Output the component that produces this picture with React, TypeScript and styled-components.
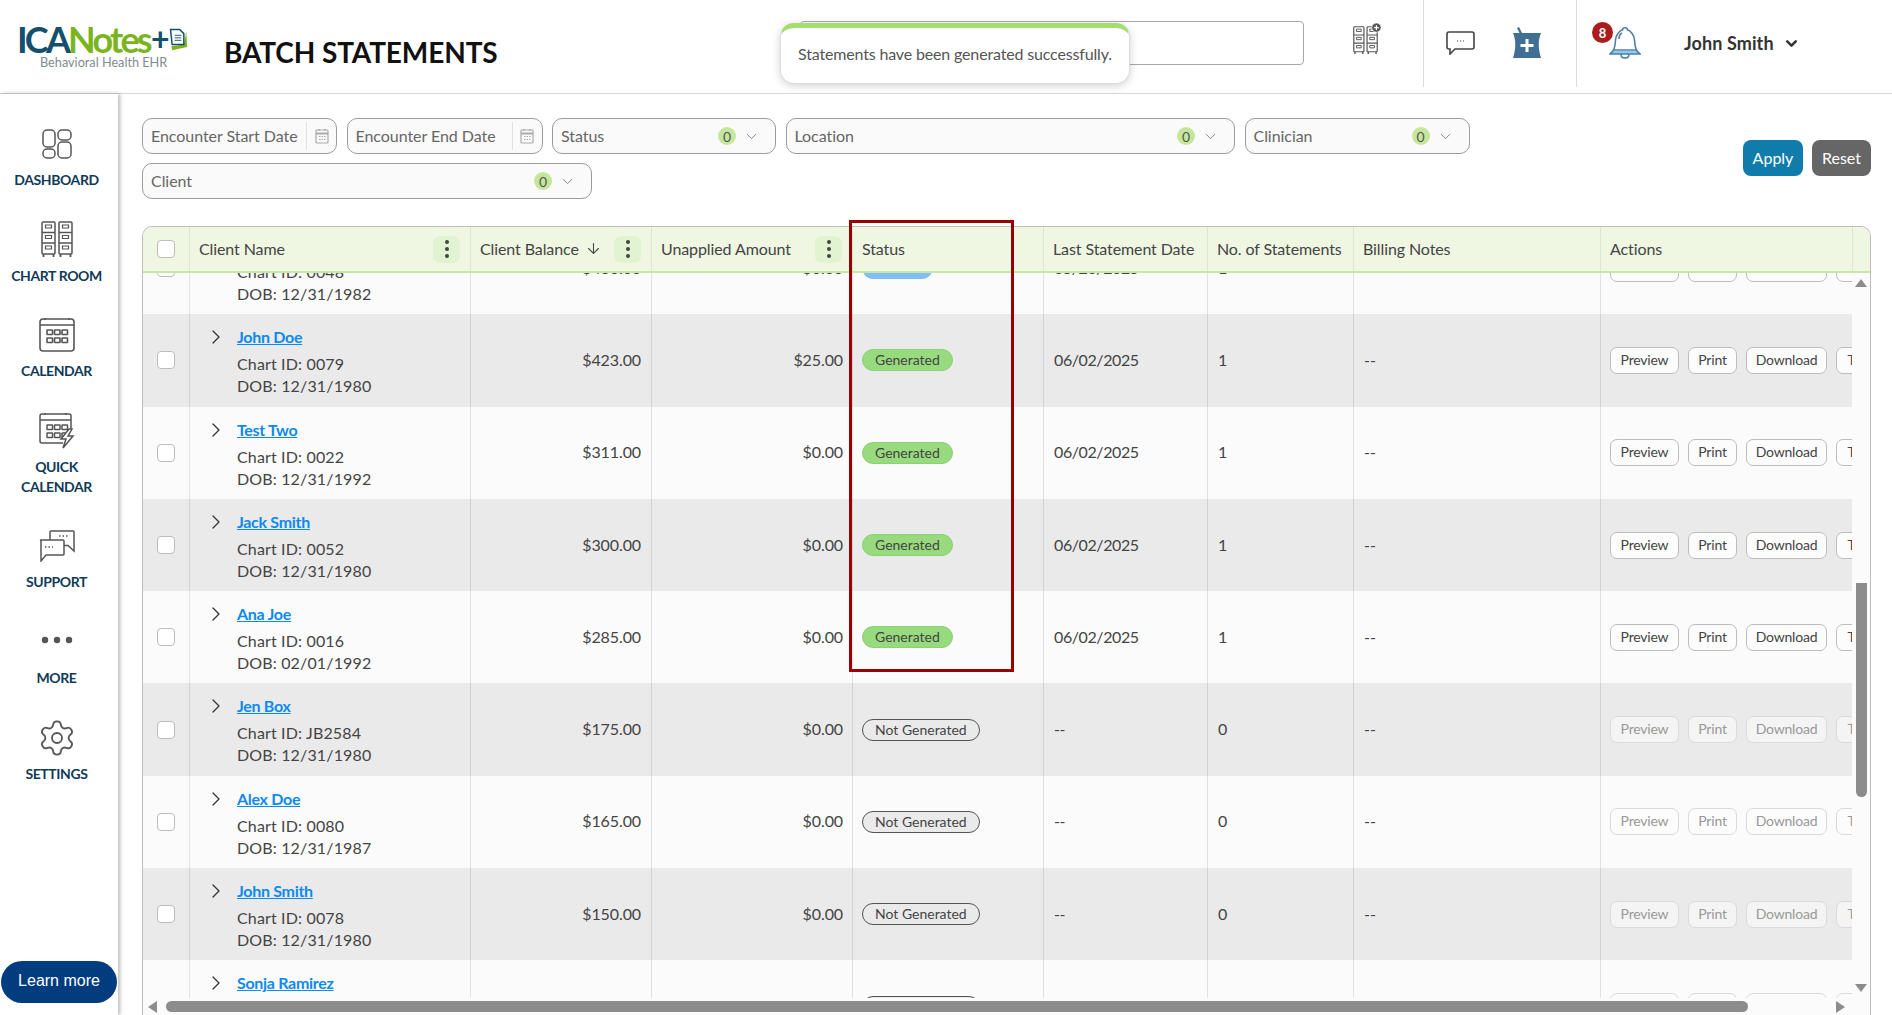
import React from 'react';
import styled, { createGlobalStyle } from 'styled-components';
import { ChevronDown, ChevronRight, ArrowDown, Settings } from 'lucide-react';

const Global = createGlobalStyle`
  html, body { margin: 0; padding: 0; height: 100%; overflow: hidden; background: #fff; }
  body { font-family: Lato, "Open Sans", sans-serif; color: #444; }
  * { box-sizing: border-box; }
`;

const Page = styled.div`
  position: relative;
  width: 1892px;
  height: 1015px;
  display: flex;
  flex-direction: column;
  overflow: hidden;
`;

/* ---------- header ---------- */
const Header = styled.header`
  flex: 0 0 94px;
  display: flex;
  align-items: flex-start;
  border-bottom: 1px solid #d6d6d6;
`;
const Logo = styled.div`
  flex: 0 0 224px;
  padding: 21px 0 0 17px;
`;
const LogoMark = styled.div`
  display: flex;
  align-items: center;
  height: 36px;
  font-size: 36px;
  font-weight: 700;
  letter-spacing: -2.8px;
  line-height: 36px;
`;
const LogoIca = styled.span`color: #14506e;`;
const LogoNotes = styled.span`color: #7ab51d;`;
const LogoPlus = styled.span`color: #14506e; margin-left: 1px; font-size: 32px; letter-spacing: -1px;`;
const LogoTag = styled.div`
  margin: -2px 0 0 23px;
  font-size: 12.7px;
  line-height: 15px;
  color: #7f8c92;
  white-space: nowrap;
`;
const Title = styled.h1`
  flex: 0 0 576px;
  margin: 0;
  padding-top: 34px;
  font-size: 28px;
  line-height: 36px;
  font-weight: 700;
  letter-spacing: -0.12px;
  color: #111;
  white-space: nowrap;
`;
const Search = styled.div`
  flex: 0 0 504px;
  height: 44px;
  margin-top: 21px;
  border: 1px solid #a4a9b0;
  border-radius: 4px;
  background: #fff;
  padding: 11px 40px;
  font-size: 16px;
  color: #aaa;
`;
const HeadIcon = styled.div<{ $left: number; $top: number }>`
  flex: none;
  display: flex;
  margin-left: ${p => p.$left}px;
  margin-top: ${p => p.$top}px;
  position: relative;
`;
const Divider = styled.div<{ $left: number }>`
  flex: none;
  width: 1px;
  height: 87px;
  margin-left: ${p => p.$left}px;
  background: #dcdcdc;
`;
const Badge = styled.span`
  position: absolute;
  left: -17px;
  top: -4px;
  width: 21px;
  height: 21px;
  border-radius: 50%;
  background: #ab1c1c;
  color: #fff;
  font-size: 13px;
  font-weight: 700;
  display: flex;
  align-items: center;
  justify-content: center;
`;
const UserName = styled.div`
  flex: none;
  display: flex;
  align-items: center;
  gap: 9px;
  margin: 31px 0 0 43px;
  font-size: 18px;
  line-height: 24px;
  font-weight: 700;
  color: #333;
  letter-spacing: 0.1px;
`;
const Toast = styled.div`
  position: absolute;
  left: 780px;
  top: 23px;
  width: 350px;
  height: 61px;
  border-radius: 14px;
  background: #fff;
  border: 1px solid #ddd;
  border-top: 5px solid #a6dd70;
  box-shadow: 0 2px 8px rgba(0, 0, 0, 0.18);
  padding: 14px 0 0 17px;
  font-size: 16px;
  line-height: 24px;
  letter-spacing: -0.16px;
  color: #555;
  white-space: nowrap;
`;

/* ---------- sidebar ---------- */
const Body = styled.div`
  flex: 1;
  min-height: 0;
  display: flex;
`;
const Sidebar = styled.nav`
  flex: 0 0 118px;
  min-width: 0;
  display: flex;
  flex-direction: column;
  padding: 30px 6px 12px 1px;
  gap: 29.6px;
  box-shadow: 2px 0 4px rgba(0, 0, 0, 0.28);
  position: relative;
  z-index: 1;
`;
const NavItem = styled.div`
  display: flex;
  flex-direction: column;
  align-items: center;
`;
const NavIcon = styled.div`
  height: 40px;
  display: flex;
  align-items: center;
  justify-content: center;
`;
const NavLabel = styled.div`
  margin-top: 6px;
  font-size: 14px;
  line-height: 20px;
  font-weight: 700;
  color: #0f3a58;
  text-align: center;
  letter-spacing: -0.4px;
`;
const LearnMore = styled.button`
  flex: none;
  margin-top: auto;
  height: 42px;
  width: 116px;
  border: 0;
  border-radius: 21px;
  background: #003c7e;
  color: #fff;
  padding: 0 0 3px;
  font-family: "Liberation Sans", Arial, sans-serif;
  font-size: 16px;
`;

/* ---------- content ---------- */
const Content = styled.main`
  position: relative;
  flex: 1;
  min-width: 0;
  display: flex;
  flex-direction: column;
  padding: 24px 21px 0 24px;
`;
const Toolbar = styled.div`
  display: flex;
  align-items: flex-start;
  justify-content: space-between;
`;
const Filters = styled.div`
  width: 1340px;
  display: flex;
  flex-wrap: wrap;
  gap: 9px 9.5px;
`;
const Filter = styled.div<{ $w: number }>`
  flex: 0 0 ${p => p.$w}px;
  height: 36px;
  display: flex;
  align-items: center;
  border: 1px solid #9c9c9c;
  border-radius: 10px;
  background: #fafafa;
  padding-left: 8px;
  font-size: 16px;
  color: #666;
`;
const FilterLabel = styled.span`
  flex: 1;
  padding-bottom: 1px;
  white-space: nowrap;
  letter-spacing: -0.05px;
`;
const Count = styled.span`
  width: 18px;
  height: 18px;
  border-radius: 50%;
  background: #c5e79c;
  color: #555;
  font-size: 14px;
  display: flex;
  align-items: center;
  justify-content: center;
  margin-right: 7px;
`;
const FilterChevron = styled.span`
  display: flex;
  margin-right: 15px;
  color: #888;
`;
const DateButton = styled.span`
  flex: 0 0 30px;
  height: 28px;
  display: flex;
  align-items: center;
  justify-content: center;
  border-left: 1px solid #e0e0e0;
`;
const Actions = styled.div`
  display: flex;
  gap: 9px;
  margin-top: 22px;
`;
const MainButton = styled.button<{ $bg: string; $w: number }>`
  width: ${p => p.$w}px;
  height: 36px;
  border: 0;
  border-radius: 8px;
  background: ${p => p.$bg};
  color: #fff;
  font-family: inherit;
  font-size: 16px;
  padding: 0 0 2px;
`;

/* ---------- table ---------- */
const columns = '47px 281px 181px 201px 191px 164px 146px 247px 252px';
const Card = styled.section`
  flex: 1;
  min-height: 0;
  margin-top: 27px;
  display: flex;
  flex-direction: column;
  border: 1px solid #bdbdbd;
  border-bottom: 0;
  border-radius: 10px 10px 0 0;
  overflow: hidden;
  background: #fbfbfb;
`;
const HeadRow = styled.div`
  flex: 0 0 46px;
  display: grid;
  grid-template-columns: ${columns} 1fr;
  background: #eff7e2;
  border-bottom: 2px solid #c8e6a8;
`;
const HeadCell = styled.div`
  display: flex;
  align-items: center;
  justify-content: space-between;
  padding: 0 10px 0 9px;
  font-size: 16px;
  letter-spacing: -0.1px;
  color: #444;
  white-space: nowrap;
  border-right: 1px solid #dce8cc;
`;
const HeadText = styled.span`
  display: flex;
  align-items: center;
  gap: 6px;
  padding-bottom: 2px;
`;
const CheckCell = styled(HeadCell)`
  justify-content: center;
  padding: 0;
`;
const Kebab = styled.span`
  width: 27px;
  height: 27px;
  border-radius: 7px;
  background: #e2f3d1;
  display: flex;
  flex-direction: column;
  align-items: center;
  justify-content: center;
  gap: 3px;
`;
const KebabDot = styled.i`
  width: 4px;
  height: 4px;
  border-radius: 50%;
  background: #444;
`;
const Check = styled.span`
  flex: none;
  width: 18px;
  height: 18px;
  border: 1px solid #bcbcbc;
  border-radius: 4px;
  background: #fff;
`;
const ScrollArea = styled.div`
  flex: 1;
  min-height: 0;
  display: flex;
`;
const Viewport = styled.div`
  flex: 0 0 1709px;
  overflow: hidden;
`;
const Rows = styled.div`
  margin-top: -51px;
`;
const Row = styled.div<{ $odd: boolean }>`
  --line: ${p => (p.$odd ? '#d2d2d2' : '#e2e2e2')};
  height: 92.3px;
  display: grid;
  grid-template-columns: ${columns};
  background: ${p => (p.$odd ? '#eaeaea' : '#fbfbfb')};
  color: #444;
  font-size: 16px;
`;
const Cell = styled.div`
  display: flex;
  align-items: center;
  padding: 0 10px 2px;
  border-right: 1px solid var(--line);
  white-space: nowrap;
  overflow: hidden;
`;
const DateCell = styled(Cell)`
  letter-spacing: -0.4px;
`;
const BoxCell = styled(Cell)`
  justify-content: center;
  padding: 0;
`;
const AmountCell = styled(Cell)<{ $pad: number }>`
  justify-content: flex-end;
  padding: 0 ${p => p.$pad}px 2px 0;
  letter-spacing: -0.1px;
`;
const ClientCell = styled(Cell)`
  display: block;
  padding: 12px 0 0 13.5px;
  line-height: 22px;
`;
const NameLine = styled.div`
  display: flex;
  align-items: center;
  gap: 9.5px;
  height: 22px;
  margin-bottom: 5px;
  color: #333;
`;
const ClientLink = styled.a`
  color: #0c8af0;
  font-weight: 700;
  letter-spacing: -0.3px;
  text-decoration: underline;
`;
const Meta = styled.div`
  margin-left: 33.5px;
  letter-spacing: 0.15px;
`;
const Pill = styled.span<{ $kind: string }>`
  height: 22px;
  display: inline-flex;
  align-items: center;
  padding: 0 12px 1px;
  margin: 2px 0 0 -1px;
  border-radius: 11px;
  font-size: 14px;
  color: #444;
  border: 1px solid
    ${p => (p.$kind === 'Generated' ? '#8cd173' : p.$kind === 'Printed' ? '#7db9f3' : '#555')};
  background: ${p =>
    p.$kind === 'Generated' ? '#98da7e' : p.$kind === 'Printed' ? '#82bff6' : '#eaeaea'};
`;
const ActionCell = styled(Cell)`
  gap: 9px;
  padding: 0 0 0 9px;
  border-right: 0;
`;
const RowButton = styled.button<{ $off: boolean; $odd: boolean; $w: number }>`
  flex: none;
  width: ${p => p.$w}px;
  height: 27px;
  padding: 0 0 2px;
  border-radius: 7px;
  font-family: inherit;
  font-size: 14px;
  letter-spacing: -0.2px;
  border: 1px solid ${p => (p.$off ? '#dadada' : '#bdbdbd')};
  color: ${p => (p.$off ? '#999' : '#444')};
  background: ${p => (p.$off && p.$odd ? '#f4f4f4' : '#fcfcfc')};
`;
const VTrack = styled.div`
  flex: 1;
  display: flex;
  flex-direction: column;
  align-items: center;
  padding: 6px 0 6px;
  background: #fbfbfb;
`;
const VThumb = styled.div`
  flex: none;
  width: 11px;
  height: 214px;
  margin-top: 296px;
  border-radius: 0 0 6px 6px;
  background: #8c8c8c;
`;
const TriUp = styled.i`
  flex: none;
  width: 0;
  height: 0;
  border-left: 6px solid transparent;
  border-right: 6px solid transparent;
  border-bottom: 8px solid #8c8c8c;
`;
const TriDown = styled(TriUp)`
  margin-top: auto;
  border-bottom: 0;
  border-top: 8px solid #8c8c8c;
`;
const HTrack = styled.div`
  flex: 0 0 17px;
  display: flex;
  align-items: center;
  padding: 0 0 0 5px;
  background: #fbfbfb;
`;
const TriLeft = styled.i`
  flex: none;
  width: 0;
  height: 0;
  border-top: 6px solid transparent;
  border-bottom: 6px solid transparent;
  border-right: 9px solid #8c8c8c;
`;
const TriRight = styled.i`
  flex: none;
  width: 0;
  height: 0;
  margin-left: 88px;
  border-top: 6px solid transparent;
  border-bottom: 6px solid transparent;
  border-left: 9px solid #8c8c8c;
`;
const HThumb = styled.div`
  flex: none;
  width: 1582px;
  height: 11px;
  margin-left: 9px;
  border-radius: 6px;
  background: #8c8c8c;
`;
const Highlight = styled.div`
  position: absolute;
  left: 731px;
  top: 126px;
  width: 165px;
  height: 452px;
  border: 3px solid #990000;
  pointer-events: none;
`;

/* ---------- drawings ---------- */
const S = '#555';
const DocMark = () => (
  <svg width="20" height="25" viewBox="0 0 24 30">
    <path d="M22 6 L23 24 L5 28 L4 23 L19 21 Z" fill="#7ab51d" />
    <path d="M3 3 H14 L19 8 V21 H5 Z" fill="#fff" stroke="#14506e" strokeWidth="1.8" />
    <path d="M8 10 H16 M8 13 H16 M8 16 H16" stroke="#14506e" strokeWidth="1.1" />
  </svg>
);
const DashboardIcon = () => (
  <svg width="30" height="30" viewBox="0 0 30 30" fill="none" stroke={S} strokeWidth="1.5">
    <rect x="1" y="1" width="12" height="17" rx="4" />
    <rect x="1" y="20" width="12" height="9" rx="4" />
    <rect x="16" y="1" width="13" height="10" rx="4" />
    <rect x="16" y="13" width="13" height="16" rx="4" />
  </svg>
);
const Cabinets = ({ size = 32, plus = false }: { size?: number; plus?: boolean }) => (
  <svg
    width={size}
    height={size * 1.14}
    viewBox="0 0 32 36.5"
    fill="none"
    stroke={S}
    strokeWidth="1.5"
    style={{ overflow: 'visible' }}
  >
    {[1, 18].map(x => (
      <g key={x}>
        <rect x={x} y="1" width="13" height="32" rx="1" />
        <path d={`M${x} 11.5 H${x + 13} M${x} 22 H${x + 13}`} />
        <path d={`M${x + 3.5} 4 H${x + 9.5} V7 H${x + 3.5} Z M${x + 3.5} 14.5 H${x + 9.5} V17.5 H${x + 3.5} Z M${x + 3.5} 25 H${x + 9.5} V28 H${x + 3.5} Z`} strokeWidth="1.2" />
        <path d={`M${x + 1.5} 33 V36 M${x + 11.5} 33 V36`} strokeWidth="1.8" />
      </g>
    ))}
    {plus && (
      <g>
        <circle cx="30" cy="2" r="6" fill={S} stroke="#fff" strokeWidth="1" />
        <path d="M27 2 H33 M30 -1 V5" stroke="#fff" strokeWidth="1.6" />
      </g>
    )}
  </svg>
);
const CalendarGrid = () => (
  <g>
    {[8, 15.5, 23].map(x =>
      [13, 21].map(y => <rect key={`${x}${y}`} x={x} y={y} width="5.5" height="4.5" rx="0.5" />),
    )}
  </g>
);
const CalendarIcon = () => (
  <svg width="36" height="36" viewBox="0 0 36 36" fill="none" stroke={S} strokeWidth="1.6">
    <rect x="1" y="2" width="34" height="32" rx="3" />
    <path d="M1 8 H35 M6 1 V3 M30 1 V3" />
    <CalendarGrid />
  </svg>
);
const QuickIcon = () => (
  <svg width="36" height="37" viewBox="0 0 36 37" fill="none" stroke={S} strokeWidth="1.5">
    <path d="M24 31 H3 Q1 31 1 29 V4 Q1 2 3 2 H30 Q32 2 32 4 V17" />
    <path d="M1 8 H32 M6 1 V3 M27 1 V3" />
    <CalendarGrid />
    <path d="M30 17 L22 27 H27 L24 36 L34 24 H29 L33 17 Z" fill="#fff" />
  </svg>
);
const SupportIcon = () => (
  <svg width="36" height="32" viewBox="0 0 36 32" fill="none" stroke={S} strokeWidth="1.5">
    <path d="M11 10 V2 Q11 1 12 1 H34 Q35 1 35 2 V21 L29 15.5 H25" />
    <path d="M2 10 H24 Q25 10 25 11 V24 Q25 25 24 25 H7 L2 31 V11 Q1 10 2 10 Z" fill="#fff" />
    <path d="M20 6 H29 M6 17 H14" strokeDasharray="1.5 2" />
  </svg>
);
const DotsIcon = () => (
  <svg width="32" height="10" viewBox="0 0 32 10" style={{ marginTop: -4 }} fill="#555">
    <circle cx="4" cy="5" r="3.2" />
    <circle cx="16" cy="5" r="3.2" />
    <circle cx="28" cy="5" r="3.2" />
  </svg>
);
const ChatIcon = () => (
  <svg width="29" height="24" viewBox="0 0 29 24" fill="none" stroke="#444" strokeWidth="1.6">
    <path d="M3 1 H26 Q28 1 28 3 V16 Q28 18 26 18 H9 L4 23 V18 H3 Q1 18 1 16 V3 Q1 1 3 1 Z" />
    <path d="M11 10 H18" strokeDasharray="1.2 1.8" strokeWidth="1" />
  </svg>
);
const MortarIcon = () => (
  <svg width="30" height="32" viewBox="0 0 30 32">
    <path d="M7 0 L10 6 H7.5 L5 1 Z" fill="#3f6f94" />
    <path d="M1 6 H29 C26 13 26 21 29 31 H1 C4 21 4 13 1 6 Z" fill="#3f6f94" />
    <path d="M15 12 V25 M8.5 18.5 H21.5" stroke="#fff" strokeWidth="3" />
  </svg>
);
const BellIcon = () => (
  <svg width="32" height="33" viewBox="0 0 32 33" fill="none">
    <path d="M4 25 H28 L30 28 H2 Z" fill="#8ecbf6" />
    <path
      d="M1 28 H31 C27 25 26 22 25.5 14 C25 8 21 4.5 18.5 4 C18.5 1 13.5 1 13.5 4 C11 4.5 7 8 6.5 14 C6 22 5 25 1 28 Z M4 24 H28 M12 28.5 C12 33 20 33 20 28.5 M10 13 C10 10 11 8 13 7"
      stroke="#4f7fa5"
      strokeWidth="1.6"
    />
  </svg>
);
const SmallCalendar = () => (
  <svg width="14" height="16" viewBox="0 0 14 16" fill="none" stroke="#aaa" strokeWidth="1.2">
    <rect x="1" y="2" width="12" height="13" rx="1" />
    <path d="M1 5.5 H13" strokeWidth="2" />
    <path d="M4 1 V3 M10 1 V3" />
    <path d="M4 8.5 H5.5 M6.5 8.5 H8 M9 8.5 H10.5 M4 11.5 H5.5 M6.5 11.5 H8 M9 11.5 H10.5" />
  </svg>
);

/* ---------- data ---------- */
const nav = [
  { label: ['DASHBOARD'], icon: <DashboardIcon /> },
  { label: ['CHART ROOM'], icon: <Cabinets /> },
  { label: ['CALENDAR'], icon: <CalendarIcon /> },
  { label: ['QUICK', 'CALENDAR'], icon: <QuickIcon /> },
  { label: ['SUPPORT'], icon: <SupportIcon /> },
  { label: ['MORE'], icon: <DotsIcon /> },
  { label: ['SETTINGS'], icon: <Settings size={40} strokeWidth={1.1} color="#555" /> },
];

type Rec = {
  name: string; id: string; dob: string; bal: string; un: string;
  status: string; date: string; n: string;
};
const rows: Rec[] = [
  { name: 'Jane Doe', id: '0048', dob: '12/31/1982', bal: '$430.00', un: '$0.00', status: 'Printed', date: '05/20/2025', n: '1' },
  { name: 'John Doe', id: '0079', dob: '12/31/1980', bal: '$423.00', un: '$25.00', status: 'Generated', date: '06/02/2025', n: '1' },
  { name: 'Test Two', id: '0022', dob: '12/31/1992', bal: '$311.00', un: '$0.00', status: 'Generated', date: '06/02/2025', n: '1' },
  { name: 'Jack Smith', id: '0052', dob: '12/31/1980', bal: '$300.00', un: '$0.00', status: 'Generated', date: '06/02/2025', n: '1' },
  { name: 'Ana Joe', id: '0016', dob: '02/01/1992', bal: '$285.00', un: '$0.00', status: 'Generated', date: '06/02/2025', n: '1' },
  { name: 'Jen Box', id: 'JB2584', dob: '12/31/1980', bal: '$175.00', un: '$0.00', status: 'Not Generated', date: '--', n: '0' },
  { name: 'Alex Doe', id: '0080', dob: '12/31/1987', bal: '$165.00', un: '$0.00', status: 'Not Generated', date: '--', n: '0' },
  { name: 'John Smith', id: '0078', dob: '12/31/1980', bal: '$150.00', un: '$0.00', status: 'Not Generated', date: '--', n: '0' },
  { name: 'Sonja Ramirez', id: '0077', dob: '12/31/1980', bal: '$140.00', un: '$0.00', status: 'Not Generated', date: '--', n: '0' },
];

const rowActions = [
  { label: 'Preview', w: 69 },
  { label: 'Print', w: 49 },
  { label: 'Download', w: 81 },
  { label: 'Text', w: 48 },
];

const Dots = () => (
  <Kebab>
    <KebabDot />
    <KebabDot />
    <KebabDot />
  </Kebab>
);

const SelectFilter = ({ label, w }: { label: string; w: number }) => (
  <Filter $w={w}>
    <FilterLabel>{label}</FilterLabel>
    <Count>0</Count>
    <FilterChevron>
      <ChevronDown size={17} strokeWidth={1.4} />
    </FilterChevron>
  </Filter>
);
const DateFilter = ({ label, w }: { label: string; w: number }) => (
  <Filter $w={w}>
    <FilterLabel>{label}</FilterLabel>
    <DateButton>
      <SmallCalendar />
    </DateButton>
  </Filter>
);

export default function App() {
  return (
    <Page>
      <Global />
      <Header>
        <Logo>
          <LogoMark>
            <LogoIca>ICA</LogoIca>
            <LogoNotes>Notes</LogoNotes>
            <LogoPlus>+</LogoPlus>
            <DocMark />
          </LogoMark>
          <LogoTag>Behavioral Health EHR</LogoTag>
        </Logo>
        <Title>BATCH STATEMENTS</Title>
        <Search>Search Charts</Search>
        <HeadIcon $left={49} $top={26}>
          <Cabinets size={25} plus />
        </HeadIcon>
        <Divider $left={45} />
        <HeadIcon $left={22} $top={31}>
          <ChatIcon />
        </HeadIcon>
        <HeadIcon $left={37} $top={27}>
          <MortarIcon />
        </HeadIcon>
        <Divider $left={34} />
        <HeadIcon $left={32} $top={26}>
          <Badge>8</Badge>
          <BellIcon />
        </HeadIcon>
        <UserName>
          John Smith
          <ChevronDown size={17} strokeWidth={3.5} />
        </UserName>
      </Header>
      <Toast>Statements have been generated successfully.</Toast>
      <Body>
        <Sidebar>
          {nav.map(item => (
            <NavItem key={item.label.join()}>
              <NavIcon>{item.icon}</NavIcon>
              <NavLabel>
                {item.label.map(l => (
                  <div key={l}>{l}</div>
                ))}
              </NavLabel>
            </NavItem>
          ))}
          <LearnMore>Learn more</LearnMore>
        </Sidebar>
        <Content>
          <Toolbar>
            <Filters>
              <DateFilter label="Encounter Start Date" w={195} />
              <DateFilter label="Encounter End Date" w={196} />
              <SelectFilter label="Status" w={224} />
              <SelectFilter label="Location" w={449.5} />
              <SelectFilter label="Clinician" w={225} />
              <SelectFilter label="Client" w={450} />
            </Filters>
            <Actions>
              <MainButton $bg="#107cac" $w={60}>Apply</MainButton>
              <MainButton $bg="#666666" $w={59}>Reset</MainButton>
            </Actions>
          </Toolbar>
          <Card>
            <HeadRow>
              <CheckCell><Check /></CheckCell>
              <HeadCell>
                <HeadText>Client Name</HeadText>
                <Dots />
              </HeadCell>
              <HeadCell>
                <HeadText>
                  Client Balance <ArrowDown size={17} strokeWidth={1.5} />
                </HeadText>
                <Dots />
              </HeadCell>
              <HeadCell>
                <HeadText>Unapplied Amount</HeadText>
                <Dots />
              </HeadCell>
              <HeadCell><HeadText>Status</HeadText></HeadCell>
              <HeadCell><HeadText>Last Statement Date</HeadText></HeadCell>
              <HeadCell><HeadText>No. of Statements</HeadText></HeadCell>
              <HeadCell><HeadText>Billing Notes</HeadText></HeadCell>
              <HeadCell><HeadText>Actions</HeadText></HeadCell>
              <span />
            </HeadRow>
            <ScrollArea>
              <Viewport>
                <Rows>
                  {rows.map((r, i) => {
                    const odd = i % 2 === 1;
                    const off = r.status === 'Not Generated';
                    return (
                      <Row key={r.name} $odd={odd}>
                        <BoxCell><Check /></BoxCell>
                        <ClientCell>
                          <NameLine>
                            <ChevronRight size={24} strokeWidth={1.3} />
                            <ClientLink>{r.name}</ClientLink>
                          </NameLine>
                          <Meta>Chart ID: {r.id}</Meta>
                          <Meta>DOB: {r.dob}</Meta>
                        </ClientCell>
                        <AmountCell $pad={10}>{r.bal}</AmountCell>
                        <AmountCell $pad={9}>{r.un}</AmountCell>
                        <Cell><Pill $kind={r.status}>{r.status}</Pill></Cell>
                        <DateCell>{r.date}</DateCell>
                        <Cell>{r.n}</Cell>
                        <Cell>--</Cell>
                        <ActionCell>
                          {rowActions.map(b => (
                            <RowButton key={b.label} $off={off} $odd={odd} $w={b.w}>{b.label}</RowButton>
                          ))}
                        </ActionCell>
                      </Row>
                    );
                  })}
                </Rows>
              </Viewport>
              <VTrack>
                <TriUp />
                <VThumb />
                <TriDown />
              </VTrack>
            </ScrollArea>
            <HTrack>
              <TriLeft />
              <HThumb />
              <TriRight />
            </HTrack>
          </Card>
          <Highlight />
        </Content>
      </Body>
    </Page>
  );
}
